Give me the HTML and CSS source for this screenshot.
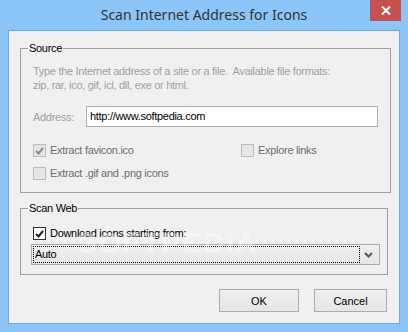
FILE: index.html
```html
<!DOCTYPE html>
<html lang="en">
<head>
    <meta charset="UTF-8">
    <title>Scan Internet Address for Icons</title>
    <link rel="stylesheet" href="styles.css">
</head>
<body>
    <div class="window">
        <div class="titlebar">
            <span class="title">Scan Internet Address for Icons</span>
            <button class="close-btn">
                <svg width="10" height="9" viewBox="0 0 10 9">
                    <path d="M1 0.5 L9 8.5 M9 0.5 L1 8.5" stroke="#fff" stroke-width="2"/>
                </svg>
            </button>
        </div>

        <div class="client">
            <fieldset class="group group-source">
                <legend class="group-title">Source</legend>
                <p class="hint">Type the Internet address of a site or a file.&nbsp; Available file formats:<br>zip, rar, ico, gif, icl, dll, exe or html.</p>

                <div class="address-row">
                    <span class="label disabled">Address:</span>
                    <div class="text-input">http://www.softpedia.com</div>
                </div>

                <div class="check-grid">
                    <label class="check disabled">
                        <span class="box checked">
                            <svg width="9" height="8" viewBox="0 0 9 8"><path d="M1 4 L3.5 6.5 L8 1" fill="none" stroke="#8a8a8a" stroke-width="2"/></svg>
                        </span>
                        Extract favicon.ico
                    </label>
                    <label class="check disabled">
                        <span class="box"></span>
                        Explore links
                    </label>
                    <label class="check disabled">
                        <span class="box"></span>
                        Extract .gif and .png icons
                    </label>
                </div>
            </fieldset>

            <fieldset class="group group-web">
                <legend class="group-title">Scan Web</legend>
                <label class="check">
                    <span class="box checked active">
                        <svg width="9" height="8" viewBox="0 0 9 8"><path d="M1 4 L3.5 6.5 L8 1" fill="none" stroke="#222" stroke-width="2"/></svg>
                    </span>
                    Download icons starting from:
                </label>
                <div class="combo">
                    <span class="combo-value">Auto</span>
                    <svg class="combo-arrow" width="9" height="6" viewBox="0 0 9 6">
                        <path d="M1 1 L4.5 4.5 L8 1" fill="none" stroke="#555" stroke-width="2"/>
                    </svg>
                </div>
                <div class="watermark">SOFTPEDIA<sup>®</sup></div>
            </fieldset>

            <div class="actions">
                <button class="btn btn-ok">OK</button>
                <button class="btn btn-cancel">Cancel</button>
            </div>
        </div>
    </div>
</body>
</html>
```

FILE: styles.css
```css
:root {
    --frame: #8cc5f8;
    --frame-edge: #70a8dc;
    --face: #f0f0f0;
    --group-line: #a0a0a0;
    --text: #000000;
    --text-disabled: #a0a0a0;
    --text-gray: #6d6d6d;
}

* {
    margin: 0;
    padding: 0;
    box-sizing: border-box;
}

body {
    width: 408px;
    height: 332px;
    overflow: hidden;
    font-family: 'Liberation Sans', Arial, sans-serif;
    font-size: 11px;
    letter-spacing: -0.3px;
    color: var(--text);
}

.window {
    width: 408px;
    height: 332px;
    background: var(--frame);
    display: flex;
    flex-direction: column;
}

/* Title bar */
.titlebar {
    height: 30px;
    display: grid;
    grid-template-columns: 38px 1fr 38px;
    align-items: start;
}

.title {
    grid-column: 2;
    text-align: center;
    font-family: 'Noto Sans', sans-serif;
    font-size: 14px;
    letter-spacing: 0;
    line-height: 20px;
    padding-top: 5px;
    color: #333333;
}

.close-btn {
    grid-column: 3;
    width: 31px;
    height: 21px;
    border: none;
    background: #c75050;
    display: flex;
    align-items: center;
    justify-content: center;
}

/* Client area */
.client {
    flex: 1;
    margin: 0 8px 8px;
    background: var(--face);
    border: 1px solid var(--frame-edge);
    padding: 11px 12px 0 11px;
}

.group {
    border: 1px solid var(--group-line);
    padding: 0 12px 0 12px;
    width: 368px;
}

.group-title {
    margin-left: -5px;
    padding: 0 1px;
    line-height: 13px;
    color: var(--text);
}

.group-source {
    height: 151px;
}

.hint {
    color: var(--text-disabled);
    line-height: 14px;
    margin-top: 9px;
}

.disabled {
    color: var(--text-disabled);
}

.address-row {
    display: flex;
    align-items: center;
    margin-top: 14px;
}

.label {
    width: 53px;
}

.text-input {
    width: 292px;
    height: 21px;
    background: #ffffff;
    border: 1px solid #abadb3;
    padding: 0 3px;
    line-height: 19px;
    color: var(--text);
}

.check-grid {
    display: grid;
    grid-template-columns: 208px 1fr;
    row-gap: 10px;
    margin-top: 17px;
}

.check {
    display: flex;
    align-items: center;
    gap: 4px;
    line-height: 13px;
}

.check.disabled {
    color: var(--text-gray);
}

.box {
    width: 13px;
    height: 13px;
    border: 1px solid #bcbcbc;
    background: #e6e6e6;
    display: flex;
    align-items: center;
    justify-content: center;
}

.box.active {
    border-color: #333333;
    background: #ffffff;
}

.group-web {
    margin-top: 9px;
    height: 73px;
    padding: 0 7px 0 10px;
    position: relative;
}

.group-web .group-title {
    margin-left: -3px;
}

.group-web .check {
    margin-top: 12px;
    margin-left: 2px;
}

.combo {
    margin-top: 4px;
    width: 349px;
    height: 21px;
    border: 1px solid #acacac;
    background: linear-gradient(#f0f0f0, #e5e5e5);
    display: flex;
    align-items: center;
    padding: 0 6px 0 1px;
}

.combo-value {
    width: 327px;
    height: 17px;
    line-height: 15px;
    padding-left: 1px;
    border: 1px dotted #000000;
}

.combo-arrow {
    margin-left: auto;
}

.watermark {
    position: absolute;
    left: 56px;
    top: 11px;
    font-size: 30px;
    font-weight: bold;
    letter-spacing: 1px;
    color: rgba(255, 255, 255, 0.4);
    pointer-events: none;
}

.watermark sup {
    font-size: 9px;
    font-weight: normal;
    vertical-align: top;
}

/* Buttons */
.actions {
    display: flex;
    justify-content: flex-end;
    gap: 15px;
    margin-top: 14px;
}

.btn {
    height: 23px;
    border: 1px solid #acacac;
    background: linear-gradient(#f0f0f0, #e5e5e5);
    font-family: 'Liberation Sans', Arial, sans-serif;
    font-size: 11px;
    color: var(--text);
}

.btn-ok {
    width: 80px;
}

.btn-cancel {
    width: 73px;
}
```
